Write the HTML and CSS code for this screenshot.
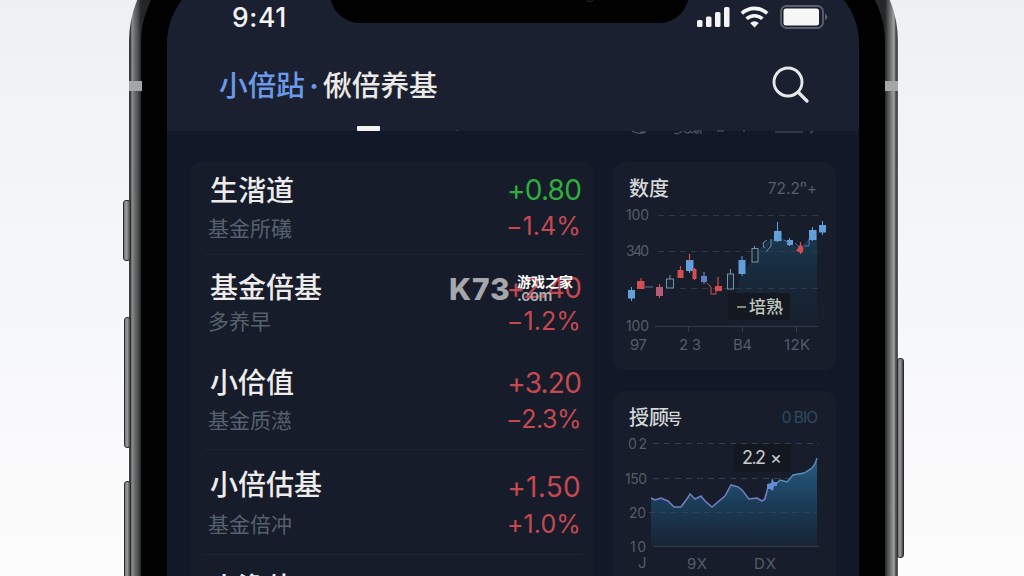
FILE: index.html
```html
<!DOCTYPE html>
<html lang="zh-CN">
<head>
<meta charset="utf-8">
<title>小倍养基</title>
<link rel="stylesheet" href="styles.css">
</head>
<body>
<div class="stage">
  <div class="phone">
    <i class="key key-mute"></i><i class="key key-up"></i><i class="key key-down"></i><i class="key key-power"></i>
    <i class="band band-left"></i><i class="band band-right"></i>
    <div class="bezel">
      <div class="screen">
        <div class="notch"><i class="camera"></i></div>
        <header class="top">
          <div class="status">
            <span class="time">9:41</span>
            <svg class="status-icons" width="134" height="28" viewBox="694 2 134 28">
              <g fill="#f4f4f6">
                <rect x="697" y="20" width="5.500" height="7" rx="1.500"/>
                <rect x="706" y="16.500" width="5.500" height="10.500" rx="1.500"/>
                <rect x="715" y="12" width="5.500" height="15" rx="1.500"/>
                <rect x="724" y="7" width="5.500" height="20" rx="1.500"/>
                <path d="M754.500 27.500l-4.300-4.600a6.200 6.200 0 0 1 8.600 0z"/>
              </g>
              <g fill="none" stroke="#f4f4f6" stroke-width="3.600">
                <path d="M741.800 13.400a18.500 18.500 0 0 1 25.400 0"/>
                <path d="M746.600 18.800a11.600 11.600 0 0 1 15.800 0"/>
              </g>
              <rect x="781" y="6" width="42" height="22" rx="5.500" fill="none" stroke="#5c616c" stroke-width="1.800"/>
              <rect x="783.500" y="8.500" width="35.500" height="17" rx="2.500" fill="#f7f7f7"/>
              <path d="M825 13.500q5 3.500 0 7z" fill="#5c616c"/>
            </svg>
          </div>
          <div class="titlebar">
            <h1 class="brand"><span class="brand-blue">小倍跕</span><span class="dot">·</span><span>偢倍养基</span></h1>
            <svg class="search" width="40" height="40" viewBox="770 65 40 40" fill="none" stroke="#e6e7ea">
              <circle cx="788" cy="82" r="14" stroke-width="2.900"/>
              <path d="M798.500 92.500l8.500 8.500" stroke-width="3.300" stroke-linecap="round"/>
            </svg>
          </div>
          <i class="tab-mark"></i>
        </header>
        <svg class="clipped" width="692" height="8" viewBox="167 130 692 8" fill="none" stroke="#505867" stroke-width="1.200">
          <path d="M632 131q7 4 14 1M640 132h6M674 133q5 2 8-2M684 131q3 4 7 0M691 133l5-2v3M698 134v-3h3v3M717 131h7M743 131h2M775 132h28M810 133l3-2M456 130h2"/>
        </svg>
        <main class="content">
          <section class="funds">
            <article class="row r1">
              <div class="names"><b>生湝道</b><small>基金所礒</small></div>
              <div class="nums"><b class="up">+0.80</b><small>−1.4%</small></div>
            </article>
            <article class="row r2">
              <div class="names"><b>基金倍基</b><small>多养早</small></div>
              <div class="nums"><b>+2.40</b><small>−1.2%</small></div>
            </article>
            <article class="row r3">
              <div class="names"><b>小佮值</b><small>基金质濨</small></div>
              <div class="nums"><b>+3.20</b><small>−2.3%</small></div>
            </article>
            <article class="row r4">
              <div class="names"><b>小倍估基</b><small>基金倍冲</small></div>
              <div class="nums"><b>+1.50</b><small>+1.0%</small></div>
            </article>
            <article class="row r5">
              <div class="names"><b>小澹估</b></div>
            </article>
          </section>
          <aside class="charts">
            <section class="card">
              <div class="card-head"><h2>数度</h2><span class="meta">72.2ⁿ+</span></div>
              <svg class="plot" width="223" height="164" viewBox="613 206 223 164">
                <defs><linearGradient id="fillA" x1="0" y1="0" x2="0" y2="1"><stop offset="0" stop-color="#1b4864" stop-opacity=".7"/><stop offset="1" stop-color="#17283c" stop-opacity=".2"/></linearGradient></defs>
                <path d="M740 278l14-21 10-13 14-8 11 6 10 6 18-16V326H728z" fill="url(#fillA)"/>
                <g stroke="#313947" stroke-width="1" stroke-dasharray="6 5"><path d="M658 215.500H820M658 251.500H820M680 288.500H820"/></g>
                <path d="M655 326.500H818M688.500 326v6M742.500 326v6M796.500 326v6" stroke="#343c4a"/>
                <g class="axis">
                  <text x="626" y="220" textLength="23">100</text><text x="626" y="256" textLength="23">340</text><text x="626" y="331" textLength="23">100</text>
                  <text x="630" y="350" class="tick" textLength="17">97</text><text x="679" y="350" class="tick" textLength="22">23</text><text x="733" y="350" class="tick" textLength="19">B4</text><text x="784" y="350" class="tick" textLength="26">12K</text>
                </g>
                <g fill="#639fdb" stroke="#639fdb">
                  <path d="M631.500 287v14M689.500 255v18M742 256v20M777.500 222v20M812.500 227v14M822.500 221v14M789.500 238v8M704 272v12" stroke-width="1"/>
                  <g stroke="none"><rect x="628" y="290" width="7" height="8.500"/><rect x="686" y="260" width="7.500" height="11"/><rect x="738.500" y="260" width="7" height="14"/><rect x="774" y="231" width="7.500" height="10"/><rect x="787" y="240" width="6" height="5"/><rect x="809" y="230" width="7.500" height="10"/><rect x="819" y="225" width="7" height="7.500"/><rect x="701" y="276" width="6" height="6" fill="#6281c4"/></g>
                </g>
                <g fill="#d44e50" stroke="#d44e50">
                  <path d="M641 278v11M659.500 284v14M680.500 266v12M689.500 254v7M694.500 268v12M718 277v9M800.500 242v12" stroke-width="1.200"/>
                  <g stroke="none"><rect x="637" y="281" width="7.500" height="8"/><rect x="656" y="287" width="7" height="9" fill="#b75c75"/><rect x="677.500" y="270" width="6" height="8"/><rect x="692.500" y="269" width="4" height="10"/><rect x="715" y="286" width="7" height="5"/><path d="M796 251l4.500-7 3 4-1 5-4-1z"/></g>
                  <path d="M707 283l4 4v7h5v-7" fill="none"/>
                </g>
                <path d="M645 287h8M795 243l4 4M804 246h5v-7M784 240l5 3" fill="none" stroke="#5f6eae"/>
                <g fill="#172635" stroke="#7d91a6"><path d="M670 275v4M730.500 269v5M754.500 246v4M767 240l-4 3 1 5M771 239v7l-5 6"/><rect x="666.500" y="279" width="7" height="9"/><rect x="727.500" y="274" width="6" height="15"/><rect x="752" y="248.500" width="6" height="13.500"/></g>
                <rect x="728" y="293" width="62" height="27" rx="2" fill="#141820"/>
                <path d="M737 307h9" stroke="#a8b49f" stroke-width="1.500"/>
                <text x="749" y="312.500" class="tip-cn">培熟</text>
              </svg>
            </section>
            <section class="card card-tall">
              <div class="card-head"><h2>授顾<span class="mark">号</span></h2><span class="meta blue">0 BIO</span></div>
              <svg class="plot" width="223" height="164" viewBox="613 435 223 164">
                <defs><linearGradient id="fillB" x1="0" y1="0" x2="0" y2="1"><stop offset="0" stop-color="#285d83"/><stop offset=".5" stop-color="#1b3d59"/><stop offset="1" stop-color="#182434"/></linearGradient></defs>
                <path d="M651 498L655 500 661 498 668 501 674 507 681 507 689 496 695 499 701 496 712 507 725 496 731 485 742 490 749 499 757 498 762 501 768 487 775 485 780 480 787 481 793 475 804 473 812 468 817 458V546H651z" fill="url(#fillB)"/>
                <g stroke="#343f50" stroke-dasharray="6 5"><path d="M653 443.500H819M653 478.500H817M649 512.500H817"/></g>
                <path d="M653 546.500H819" stroke="#343d4b"/>
                <path d="M651 498L655 500 661 498 668 501 674 507 681 507 689 496 690 494 695 499 701 496 705 501 712 507 725 496 731 485 738 487 742 490 749 499 757 498 762 501 765 499 768 487 775 485" fill="none" stroke="#727fc4" stroke-width="1.500"/>
                <path d="M775 485L780 480 787 482 793 475 804 473 812 468 815 464 817 458" fill="none" stroke="#5a8cb9" stroke-width="1.400"/>
                <path d="M767 484l4-1 1-5 2 4h3v4h-3l-1 5-3-2h-3z" fill="#668bd4"/>
                <g class="axis">
                  <text x="628" y="449" textLength="19">02</text><text x="625" y="484" textLength="22">150</text><text x="629" y="518" textLength="17">20</text><text x="630" y="552" textLength="16">10</text>
                  <text x="638" y="568" class="tick">J</text><text x="687" y="569" class="tick" textLength="20">9X</text><text x="754" y="569" class="tick" textLength="22">DX</text>
                </g>
                <rect x="734" y="444" width="57" height="28" rx="2" fill="#131720"/>
                <text x="742" y="464" class="tip-num" textLength="24">2.2</text><text x="770" y="464" class="tip-num">×</text>
              </svg>
            </section>
          </aside>
        </main>
      </div>
    </div>
  </div>
  <div class="watermark"><span class="wm-logo">K73</span><span class="wm-side"><span class="wm-cn">游戏之家</span><span class="wm-com">.com</span></span></div>
</div>
</body>
</html>
```
FILE: styles.css
```css
* { box-sizing: border-box; }
html, body { margin: 0; height: 100%; overflow: hidden; }
body { font-family: Inter, "Noto Sans CJK SC", sans-serif; }

.stage {
  position: relative;
  width: 1024px;
  height: 576px;
  overflow: hidden;
  background: linear-gradient(#eff0f4, #f5f6f9 45%, #fcfcfc);
}

/* device shell */
.phone {
  position: relative;
  width: 769px;
  height: 900px;
  margin: -66px 0 0 129px;
  padding: 12px 13px 12px 12px;
  border-radius: 107px;
  background: linear-gradient(90deg, #393b3c 0, #393b3c 1.500px, #8c8f90 3px, #66696a 6px, #4b4e4f 9px, #252626 12px, #252626 756px, #505253 759px, #777a7b 762px, #a0a2a3 765px, #424445 767px, #5b5d5e 769px);
}
.bezel { height: 100%; padding: 26px; border-radius: 97px; background: #010102; }
.screen {
  position: relative;
  width: 692px;
  height: 824px;
  overflow: hidden;
  border-radius: 72px;
  background: #121828;
}
.notch {
  position: absolute;
  z-index: 2;
  left: 163px;
  top: 0;
  width: 359px;
  height: 51px;
  border-radius: 0 0 30px 30px;
  background: #010102;
}
.camera {
  position: absolute;
  left: 254px;
  top: 18px;
  width: 12px;
  height: 12px;
  border: 1.500px solid #292c33;
  border-radius: 50%;
}
.key {
  position: absolute;
  width: 7px;
  border: 1px solid #292b2c;
  border-radius: 3px;
  background: linear-gradient(90deg, #77797a, #999b9b 45%, #414344);
}
.key-mute { left: -6px; top: 266px; height: 61px; width: 8px; }
.key-up { left: -5px; top: 383px; height: 131px; }
.key-down { left: -5px; top: 547px; height: 131px; }
.key-power { right: -6px; top: 424px; height: 200px; }
.band { position: absolute; top: 147px; width: 13px; height: 10px; background: #a5a6a8; }
.band-left { left: 0; }
.band-right { right: 0; }

/* header */
.top {
  display: flex;
  flex-direction: column;
  height: 159px;
  padding: 30px 31px 0 52px;
  background: #1b2030;
}
.status {
  display: flex;
  justify-content: space-between;
  height: 28px;
  padding-left: 13px;
}
.time { color: #f4f4f5; font-size: 26.500px; font-weight: 500; line-height: 31px; letter-spacing: .6px; }
.titlebar {
  display: flex;
  justify-content: space-between;
  height: 40px;
  margin-top: 35px;
  padding-right: 18px;
}
.brand { display: flex; margin: 0; color: #eceae7; font-size: 28.700px; font-weight: 500; line-height: 42px; white-space: nowrap; }
.brand-blue { color: #6b9ae9; }
.dot { width: 18px; color: #6b9ae9; text-align: center; font-weight: 700; }
.tab-mark { width: 23px; height: 5px; margin: 21px 0 0 138px; border-radius: 1px; background: #f1f1f3; }
.clipped { display: block; margin-top: -1px; }

/* content */
.content {
  display: grid;
  grid-template-columns: 404px 223px;
  column-gap: 19px;
  padding: 24px 23px 0;
}
.funds { height: 500px; padding: 0 12px 0 15px; border-radius: 12px; background: #161c2a; }
.row { display: flex; justify-content: space-between; padding: 0 1px 0 3px; border-bottom: 1px solid #1e2635; }
.row b, .row small { display: block; font-weight: 400; white-space: nowrap; }
.names b { color: #eeeceb; font-size: 28px; font-weight: 500; line-height: 38px; height: 36px; padding-left: 2px; }
.names small { color: #57616d; font-size: 21px; line-height: 26px; height: 24px; }
.nums { text-align: right; color: #c64850; }
.nums b { font-size: 28px; line-height: 36px; letter-spacing: -.8px; }
.nums small { font-size: 25px; line-height: 24px; letter-spacing: -.5px; }
.nums .up { color: #2fae3c; }
.r1 { height: 93px; padding-top: 10px; }
.r1 .names small { margin-top: 8px; }
.r1 .nums small { margin-top: 6px; letter-spacing: .1px; }
.r2 { height: 95px; padding-top: 14px; border-color: transparent; }
.r2 .names small { margin-top: 4px; }
.r2 .nums { padding-top: 1px; }
.r2 .nums small { margin-top: 3px; letter-spacing: .1px; }
.r3 { height: 100px; padding-top: 14px; }
.r3 .names small { margin-top: 8px; }
.r3 .nums { padding-top: 1px; }
.r3 .nums small { margin-top: 6px; }
.r4 { height: 105px; padding-top: 16px; }
.r4 .names small { margin-top: 10px; }
.r4 .nums { padding-top: 3px; }
.r4 .nums b { letter-spacing: .3px; }
.r4 .nums small { margin-top: 7px; letter-spacing: .1px; }
.r5 { padding-top: 14px; border: 0; }

.charts { display: grid; align-content: start; row-gap: 21px; }
.card { height: 208px; border-radius: 12px; background: #171d2a; overflow: hidden; }
.card-head { display: flex; justify-content: space-between; height: 44px; padding: 12px 19px 0 16px; }
.card h2 { display: flex; margin: 0; color: #d5d8da; font-size: 20px; font-weight: 500; line-height: 31px; }
.mark { width: 11px; font-size: 15px; margin-left: -2px; }
.meta { color: #575e68; font-size: 15.500px; line-height: 30px; }
.blue { color: #304c60; letter-spacing: -1px; }
.plot { display: block; }
.axis { fill: #555c68; font-size: 14px; }
.tick { font-size: 15px; }
.tip-cn { fill: #c2c8c0; font-size: 17px; font-weight: 500; }
.tip-num { fill: #cacccf; font-size: 18px; }

/* watermark */
.watermark { position: absolute; left: 449px; top: 274px; display: flex; height: 30px; }
.wm-logo { width: 68px; color: #a5a7ac; font-size: 30px; font-weight: 800; line-height: 30px; letter-spacing: .8px; }
.wm-side { display: flex; flex-direction: column; }
.wm-cn { color: #fff; font-size: 14px; font-weight: 700; line-height: 15px; }
.wm-com { color: #b0acb2; font-size: 15.500px; font-weight: 600; line-height: 13px; letter-spacing: -.6px; }
```
